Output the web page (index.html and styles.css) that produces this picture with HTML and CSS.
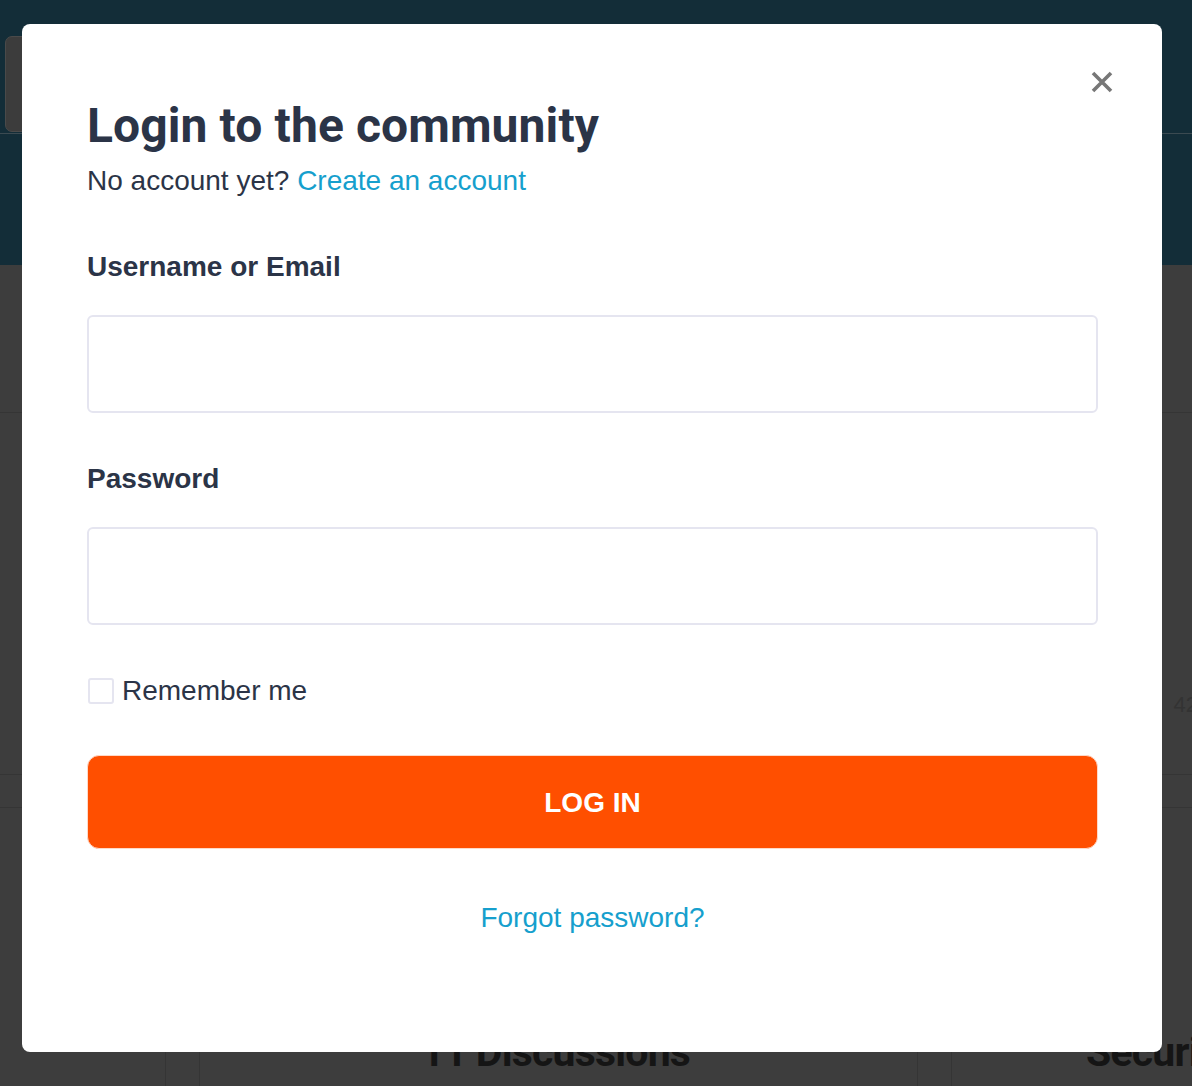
FILE: index.html
```html
<!DOCTYPE html>
<html lang="en">
<head>
<meta charset="utf-8">
<title>Login to the community</title>
<link rel="stylesheet" href="styles.css">
</head>
<body>
<div class="page">
  <header class="hdr">
    <div class="hdr-top">
      <div class="hdr-box"></div>
    </div>
    <div class="hdr-bottom"></div>
  </header>
  <section class="row row-a"></section>
  <section class="row row-b"><span class="stat">42</span></section>
  <section class="row row-c"></section>
  <section class="cols">
    <div class="col col-1"></div>
    <div class="col col-gap"></div>
    <div class="col col-2"><span class="col-title">11 Discussions</span></div>
    <div class="col col-gap"></div>
    <div class="col col-3"><span class="col-title">Security</span></div>
  </section>
</div>

<div class="modal" role="dialog" aria-labelledby="ttl">
  <button class="close" aria-label="Close">
    <svg width="24" height="24" viewBox="0 0 24 24"><path d="M3 3 L21 21 M21 3 L3 21" stroke="#777777" stroke-width="3.6" stroke-linecap="butt" fill="none"/></svg>
  </button>
  <h1 class="title" id="ttl">Login to the community</h1>
  <p class="sub">No account yet? <a class="link" href="#">Create an account</a></p>
  <form class="form">
    <label class="lbl" for="u">Username or Email</label>
    <input class="inp" id="u" type="text">
    <label class="lbl lbl-2" for="p">Password</label>
    <input class="inp" id="p" type="password">
    <label class="remember"><span class="cb"></span>Remember me</label>
    <button class="btn" type="button">LOG IN</button>
    <a class="link forgot" href="#">Forgot password?</a>
  </form>
</div>
</body>
</html>
```

FILE: styles.css
```css
* { box-sizing: border-box; }
html, body { margin: 0; padding: 0; }
body {
  width: 1192px;
  height: 1086px;
  overflow: hidden;
  background: #3d3d3d;
  font-family: "Liberation Sans", Arial, sans-serif;
}
.page { width: 1192px; }
.hdr { background: #132d38; height: 265px; display: flex; flex-direction: column; }
.hdr-top { height: 134px; border-bottom: 1px solid #3b4a51; padding: 36px 0 0 5px; }
.hdr-box { width: 40px; height: 96px; background: #3c3c3c; border: 1px solid #4a4a4a; border-radius: 7px; }
.row { border-bottom: 1px solid #353535; }
.row-a { height: 148px; }
.row-b { height: 362px; display: flex; justify-content: flex-end; align-items: flex-end; padding-bottom: 56px; overflow: hidden; }
.stat { font-size: 22px; color: #333333; margin-right: -6px; }
.row-c { height: 33px; }
.cols { display: flex; height: 278px; }
.col { border-right: 1px solid #353535; position: relative; overflow: hidden; }
.col-1 { width: 166px; }
.col-gap { width: 34px; }
.col-2 { width: 718px; }
.col-3 { flex: 1; border-right: 0; }
.col-title {
  position: absolute;
  top: 220px;
  font-family: Roboto, sans-serif;
  font-weight: 700;
  font-size: 41px;
  letter-spacing: -0.8px;
  color: #151515;
  white-space: nowrap;
}
.col-2 .col-title { left: 221px; }
.col-3 .col-title { left: 134px; }

.modal {
  position: absolute;
  left: 22px;
  top: 24px;
  width: 1140px;
  height: 1028px;
  background: #ffffff;
  border-radius: 8px;
  padding: 74px 64px 0 65px;
  color: #2b3447;
}
.close {
  position: absolute;
  top: 46px;
  right: 48px;
  width: 24px;
  height: 24px;
  padding: 0;
  border: 0;
  background: none;
  display: flex;
}
.title {
  margin: 0;
  font-family: Roboto, sans-serif;
  font-weight: 700;
  font-size: 48px;
  line-height: 56px;
  letter-spacing: 0.1px;
}
.sub { margin: 11px 0 0; font-size: 28px; line-height: 32px; }
.link { color: #169fcd; text-decoration: none; }
.form { display: flex; flex-direction: column; }
.lbl { font-weight: 700; font-size: 28px; line-height: 32px; margin-top: 54px; }
.lbl-2 { margin-top: 50px; }
.inp {
  margin-top: 32px;
  height: 98px;
  width: 100%;
  border: 2px solid #e5e5f0;
  border-radius: 6px;
  background: #ffffff;
  font-size: 24px;
  padding: 0 16px;
}
.remember {
  margin-top: 50px;
  display: flex;
  align-items: center;
  font-size: 28px;
  line-height: 32px;
}
.cb {
  width: 26px;
  height: 26px;
  border: 2px solid #e5e5f0;
  border-radius: 3px;
  margin: 0 8px 0 1px;
}
.btn {
  margin-top: 48px;
  height: 94px;
  width: 100%;
  background: #ff4f00;
  border: 1px solid #ffd9c8;
  border-radius: 12px;
  color: #ffffff;
  font-family: "Liberation Sans", Arial, sans-serif;
  font-weight: 700;
  font-size: 28px;
  letter-spacing: 0;
  padding-top: 2px;
}
.forgot {
  margin-top: 53px;
  align-self: center;
  font-size: 28px;
  line-height: 32px;
}
```
